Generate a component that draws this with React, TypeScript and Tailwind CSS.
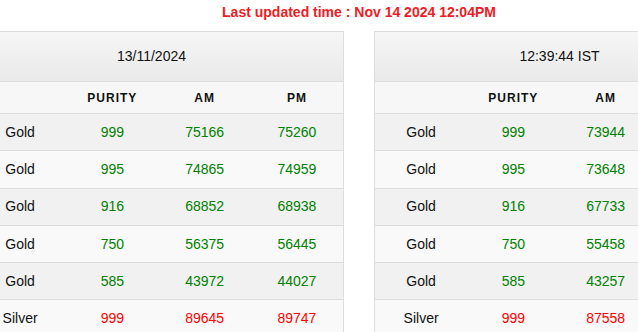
import React from "react";

type Row = { metal: string; purity: string; am: string; pm: string; red?: boolean };

const left: Row[] = [
  { metal: "Gold", purity: "999", am: "75166", pm: "75260" },
  { metal: "Gold", purity: "995", am: "74865", pm: "74959" },
  { metal: "Gold", purity: "916", am: "68852", pm: "68938" },
  { metal: "Gold", purity: "750", am: "56375", pm: "56445" },
  { metal: "Gold", purity: "585", am: "43972", pm: "44027" },
  { metal: "Silver", purity: "999", am: "89645", pm: "89747", red: true },
];

const right: Row[] = [
  { metal: "Gold", purity: "999", am: "73944", pm: "74038" },
  { metal: "Gold", purity: "995", am: "73648", pm: "73741" },
  { metal: "Gold", purity: "916", am: "67733", pm: "67819" },
  { metal: "Gold", purity: "750", am: "55458", pm: "55528" },
  { metal: "Gold", purity: "585", am: "43257", pm: "43311" },
  { metal: "Silver", purity: "999", am: "87558", pm: "87660", red: true },
];

function RateTable({ title, rows, titleClass }: { title: string; rows: Row[]; titleClass: string }) {
  return (
    <div className="w-[371px] shrink-0 border border-[#dddddd] border-b-0">
      <div
        className={`h-[50px] flex items-center justify-center border-b border-[#dddddd] bg-gradient-to-b from-[#f6f6f6] to-[#e9e9e9] text-[14px] text-[#111] ${titleClass}`}
      >
        {title}
      </div>
      <div className="grid grid-cols-4 h-[32px] items-center border-b border-[#dddddd] bg-[#f7f7f7] text-[12px] font-bold tracking-[1px] text-[#111] text-center">
        <div></div>
        <div>PURITY</div>
        <div>AM</div>
        <div>PM</div>
      </div>
      {rows.map((r, i) => (
        <div
          key={i}
          className={`grid grid-cols-4 h-[37.3px] items-center border-b border-[#dddddd] text-[14px] text-center ${
            i % 2 === 0 ? "bg-[#f1f1f1]" : "bg-[#f9f9f9]"
          }`}
        >
          <div className="text-[#111]">{r.metal}</div>
          <div className={r.red ? "text-[#ff0000]" : "text-[#008000]"}>{r.purity}</div>
          <div className={r.red ? "text-[#ff0000]" : "text-[#008000]"}>{r.am}</div>
          <div className={r.red ? "text-[#ff0000]" : "text-[#008000]"}>{r.pm}</div>
        </div>
      ))}
    </div>
  );
}

export default function App() {
  return (
    <div className="w-[638px] h-[332px] overflow-hidden bg-white font-['Liberation_Sans',Arial,sans-serif]">
      <div className="ml-[-27px] w-[772px] flex flex-col">
        <div className="h-[31px] flex items-center justify-center pb-[6px] text-[14px] font-bold text-[#ee1c25]">
          Last updated time : Nov 14 2024 12:04PM
        </div>
        <div className="flex gap-[30px]">
          <RateTable title="13/11/2024" rows={left} titleClass="pr-[14px]" />
          <RateTable title="12:39:44 IST" rows={right} titleClass="" />
        </div>
      </div>
    </div>
  );
}
